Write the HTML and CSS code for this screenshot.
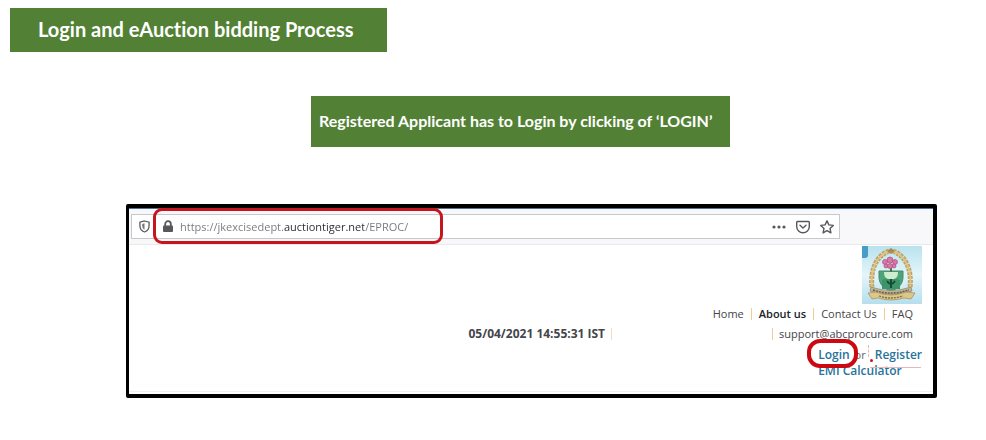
FILE: index.html
```html
<!DOCTYPE html>
<html lang="en">

<head>
    <meta charset="utf-8">
    <meta name="viewport" content="width=device-width, initial-scale=1.0">
    <title>Login and eAuction bidding Process</title>
    <link rel="stylesheet" href="styles.css">
</head>

<body>
    <h1 class="title">Login and eAuction bidding Process</h1>
    <p class="step">Registered Applicant has to Login by clicking of ‘LOGIN’</p>

    <section class="browser">
        <div class="toolbar">
            <div class="urlbar">
                <svg class="shield" viewBox="0 0 12 14" width="11" height="13">
                    <path d="M6 1 L11 2.3 V6 C11 9.5 9 12 6 13 C3 12 1 9.5 1 6 V2.3 Z" fill="none" stroke="#58585c" stroke-width="1.4" />
                    <path d="M6 3.5 V10.5 C4.2 9.6 3.5 8 3.5 6 V4.2 Z" fill="#77777b" />
                </svg>
                <svg class="lock" viewBox="0 0 12 13" width="12" height="13">
                    <path d="M3.2 6 V4 A2.8 2.8 0 0 1 8.8 4 V6" fill="none" stroke="#58585c" stroke-width="1.8" />
                    <rect x="1" y="5.5" width="10" height="6.5" rx="1" fill="#58585c" />
                </svg>
                <input class="address" type="text" aria-label="Address" value="https://jkexcisedept.auctiontiger.net/EPROC/">
                <button class="tool" aria-label="Page actions">
                    <svg viewBox="0 0 16 16" width="16" height="16" fill="#58585c">
                        <circle cx="3" cy="8" r="1.6" />
                        <circle cx="8" cy="8" r="1.6" />
                        <circle cx="13" cy="8" r="1.6" />
                    </svg>
                </button>
                <button class="tool" aria-label="Save to Pocket">
                    <svg viewBox="0 0 16 16" width="16" height="16" fill="none" stroke="#58585c" stroke-width="1.4" stroke-linejoin="round" stroke-linecap="round">
                        <path d="M2.5 2.5 H13.5 Q14.3 2.5 14.3 3.3 V7.5 A6.3 6.3 0 0 1 1.7 7.5 V3.3 Q1.7 2.5 2.5 2.5 Z" />
                        <path d="M5 6.2 L8 9 L11 6.2" />
                    </svg>
                </button>
                <button class="tool" aria-label="Bookmark">
                    <svg viewBox="0 0 16 16" width="16" height="16" fill="none" stroke="#58585c" stroke-width="1.4" stroke-linejoin="round">
                        <path d="M8 1.8 L9.9 5.9 L14.3 6.4 L11 9.4 L11.9 13.9 L8 11.6 L4.1 13.9 L5 9.4 L1.7 6.4 L6.1 5.9 Z" />
                    </svg>
                </button>
                <span class="mark mark-url"></span>
            </div>
        </div>

        <div class="site">
            <svg class="logo" viewBox="0 0 60 58" width="60" height="58" role="img" aria-label="Emblem">
                <defs>
                    <linearGradient id="sky" x1="0" y1="0" x2="0" y2="1">
                        <stop offset="0" stop-color="#b9e2ef" />
                        <stop offset="0.5" stop-color="#e3f5f9" />
                        <stop offset="1" stop-color="#b5deee" />
                    </linearGradient>
                </defs>
                <rect width="60" height="58" fill="url(#sky)" />
                <path d="M0 0 H6 V9 Q6 12 3 12 H0 Z" fill="#469dc6" />
                <!-- wreath -->
                <path d="M27 5 C14 10 8 24 10 42" fill="none" stroke="#bfa263" stroke-width="5" stroke-dasharray="3 1" />
                <path d="M31 5 C44 10 50 24 48 42" fill="none" stroke="#bfa263" stroke-width="5" stroke-dasharray="3 1" />
                <path d="M27 5 C14 10 8 24 10 42 M31 5 C44 10 50 24 48 42" fill="none" stroke="#dec384" stroke-width="2" />
                <path d="M25 5 L29 2 L33 5 L29 8 Z" fill="#a98c50" />
                <!-- shield -->
                <path d="M17 25 H41 V31 C41 38 36 43 29 45 C22 43 17 38 17 31 Z" fill="#4ba578" stroke="#468a66" />
                <path d="M20 43 V34 Q29 29 38 34 V43 Z" fill="#3c9468" />
                <path d="M22 26 H36 Q36 32 32 33 H26 Q22 32 22 26 Z" fill="#cfeccd" />
                <path d="M29 33 V42 M25 35 Q29 41 33 35" fill="none" stroke="#164c36" stroke-width="2" />
                <!-- lotus -->
                <path d="M29 26 V21" stroke="#477749" stroke-width="2" />
                <g fill="#d579a5" stroke="#b34c82" stroke-width="0.7">
                    <circle cx="28" cy="14" r="3" />
                    <circle cx="23" cy="16" r="2.5" />
                    <circle cx="33" cy="16" r="2.5" />
                    <circle cx="24" cy="20" r="2" />
                    <circle cx="32" cy="20" r="2" />
                    <circle cx="28" cy="20" r="2.5" />
                </g>
                <!-- ribbon -->
                <path d="M9 41 Q29 48 49 41 L50 45 Q29 52 8 45 Z" fill="#bfb496" stroke="#8d8367" stroke-width="0.7" />
                <path d="M11 44 Q29 50 47 44" fill="none" stroke="#625e4d" stroke-width="1.5" stroke-dasharray="2 1" />
                <path d="M6 47 L14 46 Q29 52 44 46 L53 47 L49 53 L42 52 Q29 56 16 52 L10 53 Z" fill="#dcc787" stroke="#a28c58" stroke-width="0.7" />
                <path d="M17 50 Q29 54 41 50" fill="none" stroke="#7a6b45" stroke-width="1.3" stroke-dasharray="2 1" />
            </svg>

            <nav class="menu">
                <a href="#">Home</a>
                <a href="#" class="current">About us</a>
                <a href="#">Contact Us</a>
                <a href="#">FAQ</a>
            </nav>

            <div class="info">
                <time class="clock" datetime="2021-04-05T14:55:31">05/04/2021 14:55:31 IST</time>
                <a class="support" href="#">support@abcprocure.com</a>
            </div>

            <div class="account">
                <div class="account-row">
                    <a class="login" href="#">Login<span class="mark mark-login"></span></a>
                    <span class="or">or</span>
                    <a class="register" href="#">Register<span class="scribble"></span></a>
                </div>
                <a href="#">EMI Calculator</a>
            </div>
        </div>
    </section>
</body>

</html>
```
FILE: styles.css
```css
* {
    box-sizing: border-box;
    margin: 0;
    padding: 0;
}

body {
    padding: 8px 49px 40px 10px;
    background-color: #ffffff;
    font-family: "Open Sans", "Noto Sans", sans-serif;
}

a {
    color: inherit;
    text-decoration: none;
}

svg {
    display: block;
}

.title,
.step {
    width: fit-content;
    background-color: #528135;
    color: #ffffff;
    font-family: Lato, sans-serif;
    font-weight: bold;
    font-variant-ligatures: none;
}

.title {
    padding: 0 34px 2px 28px;
    font-size: 20px;
    line-height: 42px;
}

.step {
    margin: 44px 0 0 301px;
    padding: 0 18px 2px 8px;
    font-size: 16px;
    line-height: 49px;
}

.browser {
    margin: 57px 0 0 116px;
    border: 4px solid #000000;
    border-left-width: 3px;
    border-radius: 2px;
    background-color: #ffffff;
}

.toolbar {
    padding: 5px 93px 5px 2px;
    border-top: 1px solid #526d91;
    border-bottom: 1px solid #e9e9eb;
    background-color: #f8f8fa;
}

.urlbar {
    position: relative;
    display: flex;
    align-items: center;
    height: 25px;
    padding: 0 4px 0 7px;
    border: 1px solid #c8c8cc;
    background-color: #ffffff;
}

.lock {
    margin: 0 6px 0 12px;
}

/* the domain part of the address is darker than the rest */
.address {
    flex: 1;
    min-width: 0;
    border: 0;
    outline: 0;
    background: linear-gradient(to right, #77777b 103px, #29292d 103px 184px, #77777b 184px);
    background-clip: text;
    -webkit-background-clip: text;
    color: transparent;
    font-family: "Open Sans", sans-serif;
    font-size: 11px;
}

.tool {
    margin-left: 8px;
    border: 0;
    background: none;
}

.mark {
    position: absolute;
    border: 3px solid #c5161d;
    pointer-events: none;
}

.mark-url {
    top: -7px;
    left: 21px;
    width: 290px;
    height: 36px;
    border-radius: 9px;
}

.site {
    display: flex;
    flex-direction: column;
    align-items: flex-end;
    margin-bottom: 2px;
    padding: 1px 11px 12px;
    border-bottom: 1px solid #f0f0f2;
    color: #45454a;
    font-size: 11px;
    line-height: 20px;
}

.menu,
.info {
    display: flex;
    margin-right: 9px;
}

.menu a + a {
    margin-left: 7px;
    padding-left: 8px;
}

.menu a + a,
.support {
    background: linear-gradient(#f0cc98, #f0cc98) left center / 1px 12px no-repeat;
}

.menu .current {
    color: #222226;
    font-weight: 600;
}

.info {
    gap: 160px;
}

.clock {
    padding-right: 7px;
    background: linear-gradient(#f0dcbc, #f0dcbc) right center / 1px 12px no-repeat;
    font-size: 12px;
    font-weight: bold;
}

.support {
    padding-left: 7px;
}

.account {
    margin-top: 3px;
    color: #28739b;
    font-size: 12px;
    font-weight: 600;
    line-height: 16px;
}

.account-row {
    display: flex;
}

.login,
.register {
    position: relative;
}

.or {
    margin: 0 9px 0 5px;
    color: #66666a;
    font-size: 11px;
    font-weight: normal;
}

.mark-login {
    top: -8px;
    left: -11px;
    width: 51px;
    height: 29px;
    border-width: 4px;
    border-color: #cc0812;
    border-radius: 13px;
}

/* red pen strokes beside the register link */
.scribble {
    position: absolute;
    top: 20px;
    left: -5px;
    width: 51px;
    height: 1px;
    background-color: #eab4bb;
}

.scribble::before {
    content: "";
    position: absolute;
    top: -8px;
    left: 0;
    width: 3px;
    height: 3px;
    border-radius: 50%;
    background-color: #c5161d;
}

.scribble::after {
    content: "";
    position: absolute;
    top: -22px;
    left: -2px;
    height: 12px;
    border-left: 1px dashed #eab4bb;
}
```
